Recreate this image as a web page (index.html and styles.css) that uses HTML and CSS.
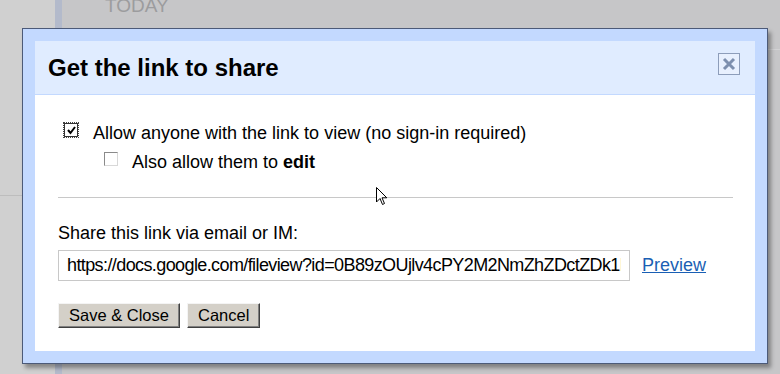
FILE: index.html
```html
<!DOCTYPE html>
<html lang="en">
<head>
    <meta charset="UTF-8">
    <title>Get the link to share</title>
    <link rel="stylesheet" href="styles.css">
</head>
<body>
    <div class="page">
        <div class="sidebar">
            <div class="sidebar-line"></div>
        </div>
        <div class="divider"></div>
        <div class="doclist">
            <div class="day">TODAY</div>
            <div class="doc-row">
                <span class="doc-check"></span>
                <span class="doc-star">&#9734;</span>
                <span class="doc-icon"></span>
                <span class="doc-name">Las Cuts .pdf</span>
            </div>
            <div class="doc-line"></div>
        </div>
    </div>

    <div class="dialog">
        <div class="dialog-inner">
            <div class="dialog-header">
                <h1 class="dialog-title">Get the link to share</h1>
                <button class="close-button" aria-label="Close">
                    <svg width="14" height="14" viewBox="0 0 14 14">
                        <path d="M2 2 L12 12 M12 2 L2 12" stroke="#7d8fae" stroke-width="3" fill="none"/>
                    </svg>
                </button>
            </div>

            <div class="dialog-body">
                <label class="option">
                    <span class="checkbox checked">
                        <svg width="11" height="11" viewBox="0 0 11 11">
                            <path d="M2 5 L4.5 8 L9 2" stroke="#000" stroke-width="2" fill="none"/>
                        </svg>
                    </span>
                    <span>Allow anyone with the link to view (no sign-in required)</span>
                </label>
                <label class="option sub-option">
                    <span class="checkbox"></span>
                    <span>Also allow them to <b>edit</b></span>
                </label>

                <hr class="separator">

                <div class="share-label">Share this link via email or IM:</div>
                <div class="link-row">
                    <input class="link-input" type="text" value="https://docs.google.com/fileview?id=0B89zOUjlv4cPY2M2NmZhZDctZDk1My00">
                    <a href="#" class="preview-link">Preview</a>
                </div>

                <div class="actions">
                    <button class="win-button">Save &amp; Close</button>
                    <button class="win-button">Cancel</button>
                </div>
            </div>
        </div>
    </div>

    <svg class="cursor" width="12" height="20" viewBox="0 0 12 20">
        <path d="M0.5 0.5 L0.5 15 L4 11.5 L6.5 17.5 L8.5 16.5 L6 10.8 L10.8 10.8 Z" fill="#fff" stroke="#000" stroke-width="1"/>
    </svg>
</body>
</html>
```

FILE: styles.css
```css
* {
    margin: 0;
    padding: 0;
    box-sizing: border-box;
}

body {
    width: 780px;
    height: 374px;
    overflow: hidden;
    font-family: 'Liberation Sans', Arial, sans-serif;
    font-size: 18px;
    color: #000;
    background: #c6c6c8;
    position: relative;
}

/* backdrop page */
.page {
    display: flex;
    height: 374px;
}

.sidebar {
    width: 55px;
    background: #d0d0d0;
    padding-top: 195px;
}

.sidebar-line {
    height: 1px;
    background: #bdbdbd;
}

.divider {
    width: 7px;
    background: #b3bacb;
}

.doclist {
    flex: 1;
    background: #c6c6c8;
    padding-left: 43px;
    margin-top: -4px;
}

.day {
    font-size: 19px;
    color: #9c9c9e;
    line-height: 20px;
}

.doc-row {
    display: flex;
    align-items: center;
    gap: 14px;
    margin-left: -30px;
    margin-top: 9px;
    height: 22px;
    color: #9a9a9c;
}

.doc-check {
    width: 16px;
    height: 16px;
    border: 1px solid #a0a0a2;
}

.doc-star {
    font-size: 18px;
    margin-left: 14px;
}

.doc-icon {
    width: 13px;
    height: 16px;
    border: 1px solid #a0a0a2;
    margin-left: 24px;
}

.doc-name {
    font-size: 20px;
}

.doc-line {
    height: 1px;
    background: #d2d2d4;
    margin-top: 2px;
}

/* dialog */
.dialog {
    position: absolute;
    left: 22px;
    top: 28px;
    width: 746px;
    height: 336px;
    border: 1px solid #4c5a78;
    background: #c3d9ff;
    padding: 12px;
    box-shadow: 3px 4px 4px rgba(0, 0, 0, 0.35);
}

.dialog-inner {
    background: #fff;
    height: 100%;
    display: flex;
    flex-direction: column;
}

.dialog-header {
    display: flex;
    justify-content: space-between;
    align-items: center;
    height: 54px;
    background: #e0ecff;
    border-bottom: 1px solid #c3d9ff;
    padding: 0 15px 0 13px;
}

.dialog-title {
    font-size: 24px;
    font-weight: bold;
}

.close-button {
    align-self: flex-start;
    margin-top: 12px;
    width: 22px;
    height: 22px;
    border: 1px solid #8d9dba;
    background: #e8f0fe;
    display: flex;
    align-items: center;
    justify-content: center;
    cursor: pointer;
}

.dialog-body {
    padding: 24px 22px 0 23px;
}

.option {
    display: flex;
    align-items: center;
    height: 29px;
    padding-left: 6px;
    gap: 15px;
}

.sub-option {
    padding-left: 46px;
    gap: 14px;
}

.checkbox {
    width: 14px;
    height: 14px;
    margin-bottom: 7px;
    border: 1px solid #8a8a8a;
    border-right-color: #d8d8d8;
    border-bottom-color: #d8d8d8;
    background: #fff;
    display: flex;
    align-items: center;
    justify-content: center;
}

.checkbox.checked {
    border: 1px solid #333;
    outline: 1px dotted #444;
    outline-offset: 0;
}

.separator {
    border: none;
    border-top: 1px solid #c8c8c8;
    margin: 20px 0 25px;
}

.share-label {
    line-height: 20px;
}

.link-row {
    display: flex;
    align-items: center;
    gap: 12px;
    margin-top: 7px;
}

.link-input {
    width: 572px;
    height: 31px;
    border: 1px solid #c8c8c8;
    padding: 0 8px;
    font-family: 'Liberation Sans', Arial, sans-serif;
    font-size: 18px;
    letter-spacing: -0.6px;
    color: #000;
    outline: none;
}

.preview-link {
    color: #1a5fb4;
    text-decoration: underline;
}

.actions {
    display: flex;
    gap: 7px;
    margin-top: 22px;
}

.win-button {
    height: 25px;
    padding: 0 10px;
    background: #d4d0c8;
    border: 1px solid;
    border-color: #f4f4f4 #404040 #404040 #f4f4f4;
    box-shadow: inset -1px -1px 0 #808080;
    font-family: 'Liberation Sans', Arial, sans-serif;
    font-size: 16.5px;
    color: #000;
}

.cursor {
    position: absolute;
    left: 376px;
    top: 187px;
}
```
